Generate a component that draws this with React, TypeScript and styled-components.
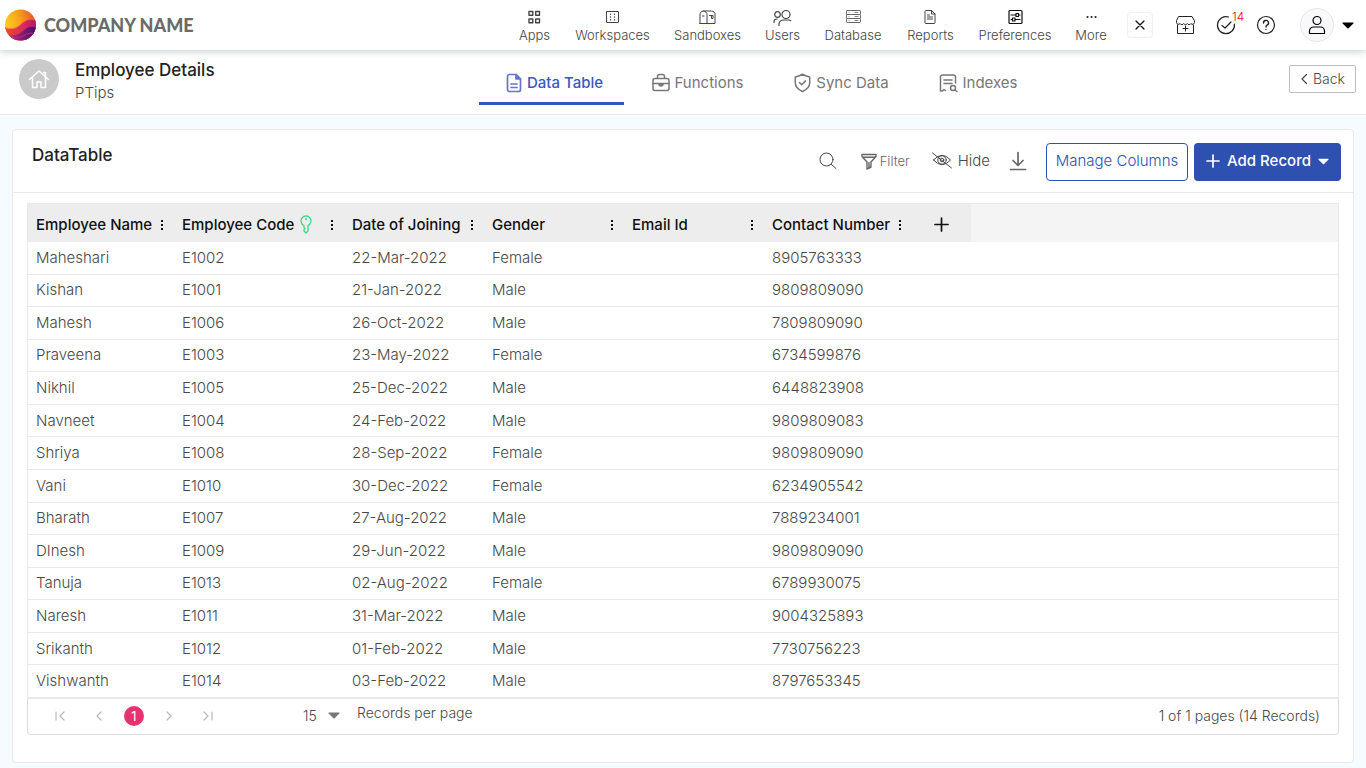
import React from "react";
import styled, { createGlobalStyle } from "styled-components";

const blue = "#2e50b1";
const line = "#e9e9e9";

const GlobalStyle = createGlobalStyle`
  * { box-sizing: border-box; }
  body {
    margin: 0;
    background: #f6fbff;
    color: #484848;
    font: 300 15px/18px Inter, "Liberation Sans", sans-serif;
  }
  button, select {
    font: inherit;
    color: inherit;
    background: none;
    border: 0;
    padding: 0;
    cursor: pointer;
  }
  a { color: inherit; text-decoration: none; }
  svg { display: block; flex: none; }
`;

const Page = styled.div`
  min-height: 100vh;
  display: flex;
  flex-direction: column;
`;

const TopBar = styled.header`
  position: relative;
  display: flex;
  align-items: center;
  height: 50px;
  padding: 0 12px 0 4px;
  background: #fff;
  box-shadow: 0 1px 8px rgba(60, 90, 105, 0.32);
`;

const Brand = styled.a`
  display: flex;
  align-items: center;
  gap: 7px;
  color: #6a6a6a;
  font: 900 18px/24px Lato, sans-serif;
`;

const MainNav = styled.nav`
  display: flex;
  margin-left: auto;
`;

const NavLink = styled.a<{ $width: number }>`
  display: flex;
  flex-direction: column;
  align-items: center;
  gap: 1px;
  width: ${(p) => p.$width}px;
  padding-top: 1px;
  font-size: 13px;
  line-height: 16px;
  color: #444;
`;

const Tools = styled.div`
  display: flex;
  align-items: center;
  margin-left: 8px;
`;

const CloseButton = styled.button`
  display: grid;
  place-items: center;
  width: 26px;
  height: 26px;
  margin-right: 22px;
  border: 1px solid #f0f0f3;
  border-radius: 4px;
  color: #111;
`;

const ToolButton = styled.button<{ $gap: number }>`
  position: relative;
  margin-right: ${(p) => p.$gap}px;
  color: #222;
`;

const Count = styled.span`
  position: absolute;
  left: 16px;
  top: -4px;
  color: #f00;
  font-size: 12px;
  line-height: 12px;
`;

const Account = styled.button`
  display: flex;
  align-items: center;
  gap: 8px;
  color: #000;
`;

const Avatar = styled.span`
  display: grid;
  place-items: center;
  width: 34px;
  height: 34px;
  border: 1px solid #e6e6ea;
  border-radius: 50%;
  background: #f9f9fb;
`;

const SubHeader = styled.div`
  display: flex;
  height: 65px;
  padding-right: 10px;
  background: #fff;
  border-bottom: 1px solid ${line};
`;

const Subject = styled.div`
  display: flex;
  flex: 0 0 479px;
  gap: 16px;
  padding: 9px 0 0 19px;
`;

const HomeBadge = styled.a`
  display: grid;
  place-items: center;
  width: 40px;
  height: 40px;
  border-radius: 50%;
  background: #cacaca;
  color: #fff;
`;

const Title = styled.h1`
  margin: 0;
  font-size: 17px;
  line-height: 22px;
  font-weight: 500;
  color: #222;
`;

const Owner = styled.p`
  margin: 3px 0 0;
  font-size: 15px;
  line-height: 18px;
`;

const Tabs = styled.nav`
  display: flex;
  gap: 3px;
`;

const Tab = styled.a<{ $active?: boolean; $width: number }>`
  display: flex;
  align-items: center;
  justify-content: center;
  gap: 5px;
  width: ${(p) => p.$width}px;
  height: 55px;
  padding: 13px 0 0 ${(p) => (p.$active ? 6 : 0)}px;
  border-bottom: 3px solid ${(p) => (p.$active ? "#3156c0" : "transparent")};
  color: ${(p) => (p.$active ? "#3a57bf" : "#777")};
  font-size: 15px;
  font-weight: ${(p) => (p.$active ? 500 : 400)};
`;

const BackButton = styled.button`
  display: flex;
  align-items: center;
  justify-content: center;
  gap: 5px;
  width: 67px;
  height: 28px;
  margin: 15px 0 0 auto;
  border: 1px solid #bdbdbd;
  border-radius: 2px;
  font-size: 14px;
`;

const Card = styled.main`
  flex: 1;
  margin: 14px 12px 5px;
  border: 1px solid ${line};
  border-radius: 4px;
  background: #fff;
`;

const CardHeader = styled.div`
  display: flex;
  justify-content: space-between;
  height: 63px;
  padding: 13px 12px 0 19px;
  border-bottom: 1px solid ${line};
`;

const CardTitle = styled.h2`
  margin: 1px 0 0;
  font-size: 17px;
  line-height: 22px;
  font-weight: 500;
  color: #222;
`;

const Actions = styled.div`
  display: flex;
  align-items: center;
  height: 38px;
`;

const IconAction = styled.button<{ $gap: number; $small?: boolean }>`
  display: flex;
  align-items: center;
  gap: ${(p) => (p.$small ? 3 : 6)}px;
  height: 36px;
  padding-bottom: 2px;
  margin-right: ${(p) => p.$gap}px;
  font-size: ${(p) => (p.$small ? 13 : 15)}px;
  color: ${(p) => (p.$small ? "#666" : "#484848")};
`;

const OutlineButton = styled.button`
  width: 142px;
  height: 38px;
  padding-bottom: 2px;
  margin-right: 6px;
  border: 1px solid ${blue};
  border-radius: 4px;
  color: ${blue};
  font-size: 15px;
`;

const PrimaryButton = styled.button`
  display: flex;
  align-items: center;
  justify-content: center;
  gap: 7px;
  width: 147px;
  height: 38px;
  padding-bottom: 2px;
  border-radius: 4px;
  background: ${blue};
  color: #fff;
  font-size: 15px;
  font-weight: 500;
`;

const Grid = styled.section`
  margin: 10px 14px 0;
`;

const Table = styled.table`
  width: 100%;
  height: 495px;
  table-layout: fixed;
  border-collapse: separate;
  border-spacing: 0;
  border: 1px solid ${line};
  border-bottom-width: 0;

  td {
    padding: 0 8px;
    border-bottom: 1px solid ${line};
    font-size: 15px;
    line-height: 18px;
  }
`;

const HeadCell = styled.th<{ $blank?: boolean }>`
  height: 38px;
  padding: 3px 8px 0;
  background: ${(p) => (p.$blank ? "#f4f4f4" : "#ededed")};
  color: #111;
  font-size: 15px;
  font-weight: 500;
  text-align: left;
  white-space: nowrap;
`;

const HeadContent = styled.div`
  display: flex;
  align-items: center;
  gap: 6px;

  button:last-child { margin-left: auto; }
`;

const AddColumn = styled.button`
  display: block;
  margin: 0 auto;
`;

const Pager = styled.div`
  display: flex;
  align-items: center;
  height: 37px;
  padding: 0 18px 2px 24px;
  border: 1px solid #dcdcdc;
  border-top-color: ${line};
  border-radius: 0 0 4px 4px;
  font-size: 14px;
`;

const PageButtons = styled.div`
  display: flex;
  align-items: center;
  gap: 23px;
  color: #b9b9b9;
`;

const CurrentPage = styled.button`
  width: 20px;
  height: 20px;
  margin: 0 -6px;
  border-radius: 50%;
  background: #e8326f;
  color: #fff;
  font-size: 13px;
  font-weight: 400;
`;

const SizeLabel = styled.label`
  display: flex;
  align-items: center;
  gap: 17px;
  margin-left: 87px;
`;

const SizePicker = styled.span`
  display: grid;
  align-items: center;
  width: 37px;

  select, svg { grid-area: 1 / 1; }
  select { appearance: none; width: 37px; }
  svg { justify-self: end; pointer-events: none; }
`;

const SizeText = styled.span`
  padding-bottom: 6px;
`;

const Summary = styled.span`
  margin-left: auto;
`;

type IconProps = { w: number; h?: number; sw?: number; children: React.ReactNode; color?: string };
const Icon = ({ w, h = w, sw = 1, children, color }: IconProps) => (
  <svg width={w} height={h} viewBox={`0 0 ${w} ${h}`} fill="none" stroke={color ?? "currentColor"}
    strokeWidth={sw} strokeLinecap="round" strokeLinejoin="round" aria-hidden="true">
    {children}
  </svg>
);

const Logo = () => (
  <svg width="33" height="32" viewBox="0 0 33 32" aria-hidden="true">
    <defs>
      <clipPath id="ball"><circle cx="16.5" cy="16" r="15.5" /></clipPath>
      <linearGradient id="sun" x1="0" y1=".5" x2="1" y2=".2">
        <stop offset="0" stopColor="#fbd31f" /><stop offset=".5" stopColor="#f9a01c" /><stop offset="1" stopColor="#e8442a" />
      </linearGradient>
      <linearGradient id="rose" x1="0" y1="0" x2="1" y2="0">
        <stop offset="0" stopColor="#ef4a33" /><stop offset=".6" stopColor="#d92a5a" /><stop offset="1" stopColor="#b3176a" />
      </linearGradient>
      <linearGradient id="plum" x1="0" y1="0" x2="1" y2="0">
        <stop offset="0" stopColor="#d43a86" /><stop offset=".5" stopColor="#8c1c70" /><stop offset="1" stopColor="#43106b" />
      </linearGradient>
    </defs>
    <g clipPath="url(#ball)">
      <rect width="33" height="32" fill="url(#sun)" />
      <path d="M0 18 C6 21 12 20 17 15 S27 9 33 11 V32 H0Z" fill="url(#rose)" />
      <path d="M0 25 C7 27 14 27 19 22 S28 17 33 19 V32 H0Z" fill="url(#plum)" />
      <path d="M0 18 C6 21 12 20 17 15 S27 9 33 11" fill="none" stroke="#f47a42" strokeWidth="1" />
      <path d="M5 28 C11 30 16 29 21 26 S28 24 33 26" fill="none" stroke="#b02e8c" strokeWidth="1" />
    </g>
  </svg>
);

const AppsIcon = () => (
  <Icon w={17} h={18} sw={1.4}>
    <rect x="3" y="3.5" width="3.8" height="3.8" /><rect x="9.7" y="3.5" width="3.8" height="3.8" />
    <rect x="3" y="11" width="3.8" height="3.8" /><rect x="9.7" y="11" width="3.8" height="3.8" />
  </Icon>
);
const WorkspacesIcon = () => (
  <Icon w={17} h={18}>
    <rect x="2.5" y="3.5" width="12" height="11" rx=".5" />
    <path d="M6.5 6.2v.1M6.5 9v.1M6.5 11.8v.1M10.5 6.2v.1M10.5 9v.1M10.5 11.8v.1" strokeWidth="1.4" />
  </Icon>
);
const SandboxesIcon = () => (
  <Icon w={17} h={18}>
    <path d="M1 15.5V7A3.5 3.5 0 0 1 4.5 3H12.500A3.500 3.500 0 0 1 16 7V15.500H1ZM4.500 3A3.500 3.500 0 0 1 8 7v8.500M3.500 8H5M10.500 7.500H14v3h-1.500v-3" />
  </Icon>
);
const UsersIcon = () => (
  <Icon w={19} h={18} sw={1.2}>
    <circle cx="13" cy="6.5" r="4" /><circle cx="4.5" cy="6.5" r="2.8" />
    <path d="M6 17.5v-1.2c0-2.6 2-4.3 4.7-4.3h4.6c1 0 1.9.3 2.4.7M1 14.5v-.7c0-1.700 1.200-2.800 3-2.800" />
  </Icon>
);
const DatabaseIcon = () => (
  <Icon w={17} h={18} color="#666">
    <rect x="1.5" y="2.5" width="14" height="4" rx=".7" /><rect x="1.5" y="6.5" width="14" height="4" rx=".7" />
    <rect x="1.5" y="10.5" width="14" height="4" rx=".7" /><path d="M4 4.500h.1M4 8.500h.1M4 12.500h.1M10 4.500h3M10 8.500h3M10 12.500h3" strokeWidth=".8" />
  </Icon>
);
const ReportsIcon = () => (
  <Icon w={17} h={18}>
    <path d="M4.500 2.500h5l3.500 3.500v8.500a1 1 0 0 1-1 1H4a1 1 0 0 1-1-1V3.500a1 1 0 0 1 1-1ZM9.500 2.500V6H13M5.500 9h5M5.500 11h5M5.500 7h2" />
  </Icon>
);
const PreferencesIcon = () => (
  <Icon w={17} h={18} sw={1.2} color="#111">
    <rect x="2" y="2.5" width="13" height="13" rx="1" />
    <path d="M4 7h5M12 7h1M4 11.5h1M8.5 11.5H13M9 5.500h2.500v3H9ZM5.500 10H8v3H5.500Z" />
  </Icon>
);
const MoreIcon = () => (
  <Icon w={17} h={18} sw={2} color="#222"><path d="M4.500 9h.1M8.500 9h.1M12.500 9h.1" /></Icon>
);

const Caret = ({ w = 12, color = "currentColor" }: { w?: number; color?: string }) => (
  <svg width={w} height="7" viewBox="0 0 12 7" aria-hidden="true">
    <path d="M1 .5H11Q12 .7 11.3 1.5L6.6 6.3Q6 6.8 5.4 6.3L.7 1.5Q0 .7 1 .5Z" fill={color} />
  </svg>
);
const Plus = ({ w }: { w: number }) => (
  <Icon w={w} sw={1.7}><path d={`M1 ${w / 2}H${w - 1}M${w / 2} 1V${w - 1}`} /></Icon>
);
const Dots = () => (
  <svg width="8" height="12" viewBox="0 0 8 12" aria-hidden="true">
    <path d="M3 1h2v2H3zM3 5h2v2H3zM3 9h2v2H3z" fill="#111" />
  </svg>
);
const KeyIcon = () => (
  <Icon w={12} h={19} color="#2fd882" sw={1.2}>
    <path d="M4 10.5A5 5 0 1 1 8 10.5V16L6 18 4 16V14.5L5 13.5 4 12.5Z" /><path d="M6 4.2v.1" strokeWidth="2" />
  </Icon>
);

const navItems: [string, number, React.ReactNode][] = [
  ["Apps", 57, <AppsIcon />],
  ["Workspaces", 99, <WorkspacesIcon />],
  ["Sandboxes", 91, <SandboxesIcon />],
  ["Users", 59, <UsersIcon />],
  ["Database", 82, <DatabaseIcon />],
  ["Reports", 73, <ReportsIcon />],
  ["Preferences", 96, <PreferencesIcon />],
  ["More", 56, <MoreIcon />],
];

const columns = [
  { label: "Employee Name", width: 146 },
  { label: "Employee Code", width: 170, key: true },
  { label: "Date of Joining", width: 140 },
  { label: "Gender", width: 140 },
  { label: "Email Id", width: 140 },
  { label: "Contact Number", width: 147 },
];

const records = [
  ["Maheshari", "E1002", "22-Mar-2022", "Female", "8905763333"],
  ["Kishan", "E1001", "21-Jan-2022", "Male", "9809809090"],
  ["Mahesh", "E1006", "26-Oct-2022", "Male", "7809809090"],
  ["Praveena", "E1003", "23-May-2022", "Female", "6734599876"],
  ["Nikhil", "E1005", "25-Dec-2022", "Male", "6448823908"],
  ["Navneet", "E1004", "24-Feb-2022", "Male", "9809809083"],
  ["Shriya", "E1008", "28-Sep-2022", "Female", "9809809090"],
  ["Vani", "E1010", "30-Dec-2022", "Female", "6234905542"],
  ["Bharath", "E1007", "27-Aug-2022", "Male", "7889234001"],
  ["DInesh", "E1009", "29-Jun-2022", "Male", "9809809090"],
  ["Tanuja", "E1013", "02-Aug-2022", "Female", "6789930075"],
  ["Naresh", "E1011", "31-Mar-2022", "Male", "9004325893"],
  ["Srikanth", "E1012", "01-Feb-2022", "Male", "7730756223"],
  ["Vishwanth", "E1014", "03-Feb-2022", "Male", "8797653345"],
];

export default function App() {
  return (
    <Page>
      <GlobalStyle />
      <TopBar>
        <Brand href="#"><Logo />COMPANY NAME</Brand>
        <MainNav aria-label="Main">
          {navItems.map(([label, width, icon]) => (
            <NavLink key={label} href="#" $width={width}>{icon}{label}</NavLink>
          ))}
        </MainNav>
        <Tools>
          <CloseButton aria-label="Close"><Icon w={10} sw={1.3}><path d="M1 1l8 8M9 1L1 9" /></Icon></CloseButton>
          <ToolButton $gap={20} aria-label="Store">
            <Icon w={21} h={20}>
              <path d="M4 1.500h13L19.500 6v1.500a2 2 0 0 1-3.600 1 2 2 0 0 1-3.600 0 2 2 0 0 1-3.600 0 2 2 0 0 1-3.600 0 2 2 0 0 1-3.600-1V6ZM2.500 10v8.500h16V10M10.500 11v5M8 13.500h5" />
            </Icon>
          </ToolButton>
          <ToolButton $gap={20} aria-label="Tasks">
            <Icon w={20} sw={1.2}>
              <path d="M12.5 2A8.5 8.5 0 1 0 18.4 9M6 10.5l3 2.5 6-6" />
            </Icon>
            <Count>14</Count>
          </ToolButton>
          <ToolButton $gap={24} aria-label="Help">
            <Icon w={20} sw={1.2}>
              <circle cx="10" cy="10" r="8.5" />
              <path d="M7.500 8A2.500 2.500 0 1 1 11 10.200Q10 10.800 10 12M10 14.500v.1" strokeWidth="1.4" />
            </Icon>
          </ToolButton>
          <Account aria-label="Account">
            <Avatar>
              <Icon w={18} h={20} sw={1.2}>
                <circle cx="9" cy="5.500" r="4" /><path d="M1.500 18.500V16A4 4 0 0 1 5.500 12h7A4 4 0 0 1 16.500 16v2.500Z" />
              </Icon>
            </Avatar>
            <Caret />
          </Account>
        </Tools>
      </TopBar>

      <SubHeader>
        <Subject>
          <HomeBadge href="#" aria-label="Home">
            <Icon w={22} h={22} sw={1.5}>
              <path d="M1.500 11.500L11 3l9.500 8.500M4.500 9v10.500H9v-5.500h4v5.500h4.500V9M15.500 4.500h2V8" />
            </Icon>
          </HomeBadge>
          <div>
            <Title>Employee Details</Title>
            <Owner>PTips</Owner>
          </div>
        </Subject>
        <Tabs aria-label="Views">
          <Tab href="#" $active $width={145}>
            <Icon w={16} h={20} sw={1.7} color="#6674cf">
              <path d="M3 1.500h7l4.500 4.500v10.500a2 2 0 0 1-2 2H3a2 2 0 0 1-1.500-2v-13A2 2 0 0 1 3 1.500ZM5 11h6M5 14.500h6" />
              <path d="M10 1.500V6h4.500Z" fill="#6674cf" />
            </Icon>
            Data Table
          </Tab>
          <Tab href="#" $width={141}>
            <Icon w={18} h={20} sw={1.5}>
              <rect x="1" y="5.5" width="16" height="12" rx="2" /><path d="M5.500 5V3.500a2 2 0 0 1 2-2h3a2 2 0 0 1 2 2V5M1 10.500h16" />
              <path d="M7 11h4Q11 13 9 13T7 11Z" fill="currentColor" />
            </Icon>
            Functions
          </Tab>
          <Tab href="#" $width={141}>
            <Icon w={17} h={20} sw={1.5}>
              <path d="M8.500 1.200Q11 3.200 15.700 4V10Q15.500 15.500 8.500 18.500 1.500 15.500 1.300 10V4Q6 3.200 8.500 1.200ZM5.500 9.500l2.200 2.200 3.800-3.800" />
            </Icon>
            Sync Data
          </Tab>
          <Tab href="#" $width={126}>
            <Icon w={19} h={20} sw={1.5}>
              <path d="M6.500 17.500L5 16.500 3.500 18H1.500V4.500A2 2 0 0 1 3.500 2h11a2 2 0 0 1 2 2V10M5 7h8M5 10.500h8" />
              <circle cx="14" cy="15" r="2.500" /><path d="M16 17l2 1.500" />
            </Icon>
            Indexes
          </Tab>
        </Tabs>
        <BackButton><Icon w={8} h={12} sw={1.2}><path d="M6.500 1.500L2 6l4.500 4.500" /></Icon>Back</BackButton>
      </SubHeader>

      <Card>
        <CardHeader>
          <CardTitle>DataTable</CardTitle>
          <Actions>
            <IconAction $gap={24} aria-label="Search">
              <Icon w={18}><circle cx="7.500" cy="7.500" r="6.500" /><path d="M12.300 12.300L17 16.500" /></Icon>
            </IconAction>
            <IconAction $gap={22} $small>
              <Icon w={16} h={17} sw={1.4}><path d="M1 1.500h14v2L10 9v5l-4 2V9L1 3.500ZM1.500 4.200h13M8 9.500v5" /></Icon>
              Filter
            </IconAction>
            <IconAction $gap={19}>
              <Icon w={20} h={18}>
                <path d="M1.500 8Q10-1.500 18.500 8 10 17.500 1.500 8ZM.5 1l19 15" /><circle cx="10" cy="8" r="4.200" /><circle cx="10" cy="8" r="1.800" />
              </Icon>
              Hide
            </IconAction>
            <IconAction $gap={19} aria-label="Download">
              <Icon w={18} h={20} sw={1.7} color="#666"><path d="M9 1.500V14M4 9.500l5 5 5-5M1.500 18.500h15" /></Icon>
            </IconAction>
            <OutlineButton>Manage Columns</OutlineButton>
            <PrimaryButton><Plus w={14} />Add Record<Caret w={11} /></PrimaryButton>
          </Actions>
        </CardHeader>

        <Grid>
          <Table>
            <colgroup>
              {columns.map((c) => <col key={c.label} width={c.width} />)}
              <col width={60} />
              <col />
            </colgroup>
            <thead>
              <tr>
                {columns.map((c) => (
                  <HeadCell key={c.label} scope="col">
                    <HeadContent>
                      {c.label}
                      {c.key && <KeyIcon />}
                      <button aria-label={`${c.label} options`}><Dots /></button>
                    </HeadContent>
                  </HeadCell>
                ))}
                <HeadCell><AddColumn aria-label="Add column"><Plus w={15} /></AddColumn></HeadCell>
                <HeadCell $blank />
              </tr>
            </thead>
            <tbody>
              {records.map(([name, code, joined, gender, phone]) => (
                <tr key={code}>
                  <td>{name}</td><td>{code}</td><td>{joined}</td><td>{gender}</td><td /><td>{phone}</td><td /><td />
                </tr>
              ))}
            </tbody>
          </Table>
          <Pager>
            <PageButtons>
              <button aria-label="First page"><Icon w={16} h={12} sw={1.2}><path d="M4 2v8M12 2L8 6l4 4" /></Icon></button>
              <button aria-label="Previous page"><Icon w={16} h={12} sw={1.2}><path d="M10 2L6 6l4 4" /></Icon></button>
              <CurrentPage aria-current="page">1</CurrentPage>
              <button aria-label="Next page"><Icon w={16} h={12} sw={1.2}><path d="M6 2l4 4-4 4" /></Icon></button>
              <button aria-label="Last page"><Icon w={16} h={12} sw={1.2}><path d="M4 2l4 4-4 4M12 2v8" /></Icon></button>
            </PageButtons>
            <SizeLabel>
              <SizePicker>
                <select defaultValue="15"><option>15</option><option>30</option></select>
                <Caret color="#777" />
              </SizePicker>
              <SizeText>Records per page</SizeText>
            </SizeLabel>
            <Summary>1 of 1 pages (14 Records)</Summary>
          </Pager>
        </Grid>
      </Card>
    </Page>
  );
}
